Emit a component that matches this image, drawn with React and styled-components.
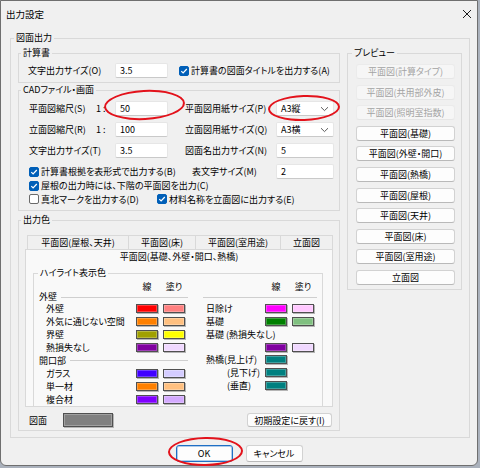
import React from 'react';
import styled, { createGlobalStyle } from 'styled-components';

const GlobalStyle = createGlobalStyle`
  html, body { margin: 0; padding: 0; }
  body {
    background: #aab1bc;
    font-family: "Noto Sans CJK JP", "Noto Sans", sans-serif;
    font-size: 9px;
    font-feature-settings: "palt";
    color: #000;
  }
  * { box-sizing: border-box; }
`;

const Window = styled.div`
  width: 478px;
  height: 466px;
  background: #f0f0f0;
  border: 1px solid #6f6f6f;
  border-radius: 0 0 6px 6px;
  display: flex;
  flex-direction: column;
`;

const TitleBar = styled.div`
  height: 26px;
  flex: none;
  display: flex;
  align-items: center;
  justify-content: space-between;
  padding: 0 5px 0 5px;
  font-size: 9.5px;
`;

const Group = styled.fieldset`
  margin: 0;
  padding: 0;
  min-width: 0;
  border: 1px solid #d9d9d9;
  flex: none;
  ${p => p.$w && `width: ${p.$w}px;`}
  ${p => p.$h && `height: ${p.$h}px;`}
`;

const Legend = styled.legend`
  margin-left: 3px;
  padding: 0 2px;
  height: 14px;
  line-height: 14px;
  white-space: nowrap;
`;

const MainGroup = styled(Group)`
  margin: 4px 0 0 9px;
`;

const MainBody = styled.div`
  display: grid;
  grid-template-columns: 322px 115px;
  column-gap: 7px;
  align-items: start;
  padding: 1px 7px 6px 7px;
`;

const Column = styled.div`
  display: flex;
  flex-direction: column;
  gap: ${p => p.$gap || 0}px;
`;

const CalcBody = styled.div`
  padding: 3px 0 4px 9px;
`;

const FormRow = styled.div`
  display: flex;
  align-items: center;
  height: ${p => p.$h || 15}px;
`;

const Cell = styled.div`
  display: flex;
  align-items: center;
  ${p => p.$w && `width: ${p.$w}px; flex: none;`}
`;

const FieldLabel = styled.span`
  width: ${p => p.$w}px;
  flex: none;
  white-space: nowrap;
  padding-left: ${p => p.$indent || 0}px;
`;

const Scale = styled.span`
  width: 19px;
  flex: none;
  white-space: nowrap;
`;

const TextBox = styled.div`
  width: ${p => p.$w || 53}px;
  height: 15px;
  flex: none;
  background: #fff;
  border: 1px solid #e6e6e6;
  border-bottom-color: #c9c9c9;
  border-radius: 2px;
  padding: 0 4px;
  display: flex;
  align-items: center;
  justify-content: space-between;
`;

const CadBody = styled.div`
  padding: 4px 4px 4px 10px;
`;

const InputRows = styled.div`
  display: flex;
  flex-direction: column;
  gap: 6px;
`;

const ColorBody = styled.div`
  padding: 8px 6px 3px 6px;
`;

const TabRow = styled.div`
  display: flex;
  height: 14px;
  padding-left: 2px;
`;

const Tab = styled.div`
  width: ${p => p.$w}px;
  flex: none;
  border: 1px solid #d9d9d9;
  border-bottom: none;
  border-right: ${p => (p.$last ? '1px solid #d9d9d9' : 'none')};
  display: flex;
  align-items: center;
  justify-content: center;
  white-space: nowrap;
  line-height: 12px;
`;

const ActiveTab = styled.div`
  height: 14px;
  background: #f9f9f9;
  border: 1px solid #d9d9d9;
  border-bottom: none;
  display: flex;
  align-items: center;
  justify-content: center;
  line-height: 12px;
`;

const TabPanel = styled.div`
  height: 144px;
  background: #f9f9f9;
  border: 1px solid #d9d9d9;
  border-top: none;
  overflow: hidden;
  padding: 3px 0 0 7px;
`;

const HighlightBody = styled.div`
  display: flex;
  gap: 15px;
  padding: 1px 0 0 5px;
`;

const ColorCol = styled.div`
  width: ${p => p.$w}px;
  flex: none;
  display: flex;
  flex-direction: column;
`;

const ColorRow = styled.div`
  display: grid;
  grid-template-columns: ${p => p.$label}px 22px 22px;
  column-gap: 5px;
  align-items: center;
  height: ${p => p.$h || 13}px;
`;

const ItemLabel = styled.span`
  white-space: nowrap;
  padding-left: ${p => p.$indent || 0}px;
  line-height: 12px;
`;

const WideLabel = styled(ItemLabel)`
  grid-column: 1 / span 3;
`;

const HeadCell = styled.span`
  text-align: center;
  line-height: 11px;
  white-space: nowrap;
`;

const Section = styled.div`
  display: flex;
  align-items: center;
  height: ${p => p.$h || 10}px;
  line-height: 10px;
  white-space: nowrap;
  &::after {
    content: '';
    flex: 1;
    height: 1px;
    background: #cfcfcf;
    margin-left: ${p => (p.$empty ? 0 : 4)}px;
  }
`;

const Swatch = styled.span`
  display: block;
  width: ${p => p.$w || 22}px;
  height: ${p => p.$h || 9}px;
  background: ${p => p.$c};
  border: 1px solid #505050;
  box-shadow: 1px 1px 0 #b5b5b5, inset 0 0 0 1px rgba(255, 255, 255, 0.25);
`;

const ColorFoot = styled.div`
  display: flex;
  align-items: center;
  justify-content: space-between;
  height: 14px;
  margin-top: 6px;
  padding: 0 1px 0 4px;
`;

const FootLabel = styled.span`
  width: 34px;
  flex: none;
`;

const PreviewBody = styled.div`
  display: flex;
  flex-direction: column;
  gap: 5.6px;
  padding: 4px 6px 4px 8px;
`;

const Button = styled.div`
  width: ${p => p.$w || 99}px;
  height: ${p => p.$h || 15}px;
  flex: none;
  display: flex;
  align-items: center;
  justify-content: center;
  white-space: nowrap;
  border-radius: 3px;
  background: ${p => (p.$disabled ? '#f6f6f6' : '#fdfdfd')};
  color: ${p => (p.$disabled ? '#a3a3a3' : '#000')};
  border: 1px solid ${p => (p.$disabled ? '#ebebeb' : '#d2d2d2')};
  border-bottom-color: ${p => (p.$disabled ? '#e6e6e6' : '#b9b9b9')};
  ${p => p.$default && `
    border: 1px solid #1f6fc5;
    box-shadow: inset 0 0 0 1px rgba(31, 111, 197, 0.35);
  `}
`;

const Footer = styled.div`
  display: flex;
  justify-content: center;
  gap: 13px;
  margin-top: 7px;
`;

const Marked = styled.span`
  position: relative;
  display: inline-flex;
  flex: none;
`;

const Ring = styled.span`
  position: absolute;
  pointer-events: none;
  left: ${p => p.$x}px;
  top: ${p => p.$y}px;
  width: ${p => p.$w}px;
  height: ${p => p.$h}px;
  border: 2px solid #e3121b;
  border-radius: 50%;
  transform: rotate(${p => p.$r || 0}deg);
`;

const CheckItem = styled.label`
  display: inline-flex;
  align-items: center;
  gap: 2px;
  white-space: nowrap;
  ${p => p.$w && `width: ${p.$w}px; flex: none;`}
`;

const Box = styled.span`
  width: 10px;
  height: 10px;
  flex: none;
  border-radius: 2px;
  display: inline-flex;
  align-items: center;
  justify-content: center;
  background: ${p => (p.$on ? '#005fb8' : '#fff')};
  border: 1px solid ${p => (p.$on ? '#005fb8' : '#6a6a6a')};
`;

const Check = ({ on = true, w, children }) => (
  <CheckItem $w={w}>
    <Box $on={on}>
      {on && (
        <svg width="8" height="8" viewBox="0 0 8 8">
          <path d="M1.3 4.2 L3.1 6 L6.8 2" fill="none" stroke="#fff" strokeWidth="1.2" />
        </svg>
      )}
    </Box>
    {children}
  </CheckItem>
);

const Chevron = () => (
  <svg width="9" height="6" viewBox="0 0 9 6">
    <path d="M1 1.2 L4.5 4.6 L8 1.2" fill="none" stroke="#5c5c5c" strokeWidth="1" />
  </svg>
);

const CloseIcon = () => (
  <svg width="10" height="10" viewBox="0 0 10 10">
    <path d="M1 1 L9 9 M9 1 L1 9" stroke="#1b1b1b" strokeWidth="1" />
  </svg>
);

const previewButtons = [
  ['平面図(計算タイプ)', true],
  ['平面図(共用部外皮)', true],
  ['平面図(照明室指数)', true],
  ['平面図(基礎)'],
  ['平面図(外壁・開口)'],
  ['平面図(熱橋)'],
  ['平面図(屋根)'],
  ['平面図(天井)'],
  ['平面図(床)'],
  ['平面図(室用途)'],
  ['立面図'],
];

const leftColors = [
  { section: '外壁' },
  { label: '外壁', line: '#ff0000', fill: '#ff8080' },
  { label: '外気に通じない空間', line: '#ff8000', fill: '#ffc080' },
  { label: '界壁', line: '#a0a000', fill: '#ffff00' },
  { label: '熱損失なし', line: '#8000a0', fill: '#f0d8ff' },
  { section: '開口部', h: 13 },
  { label: 'ガラス', line: '#4000ff', fill: '#d4ccff' },
  { label: '単一材', line: '#ff8000', fill: '#ffc080' },
  { label: '複合材', line: '#8000ff', fill: '#d4aaff' },
];

const App = () => {
  return (
    <>
      <GlobalStyle />
      <Window>
        <TitleBar>
          <span>出力設定</span>
          <CloseIcon />
        </TitleBar>

        <MainGroup $w={460}>
          <Legend>図面出力</Legend>
          <MainBody>
            <Column $gap={0}>
              <Group>
                <Legend style={{ marginLeft: 2 }}>計算書</Legend>
                <CalcBody>
                  <FormRow>
                    <FieldLabel $w={87}>文字出力サイズ(O)</FieldLabel>
                    <TextBox>3.5</TextBox>
                    <Cell style={{ marginLeft: 11 }}>
                      <Check>計算書の図面タイトルを出力する(A)</Check>
                    </Cell>
                  </FormRow>
                </CalcBody>
              </Group>

              <Group>
                <Legend style={{ marginLeft: 2 }}>CADファイル・画面</Legend>
                <CadBody>
                  <InputRows>
                    <FormRow>
                      <Cell $w={156}>
                        <FieldLabel $w={67}>平面図縮尺(S)</FieldLabel>
                        <Scale>1 :</Scale>
                        <Marked>
                          <TextBox>50</TextBox>
                          <Ring $x={-11} $y={-11} $w={81} $h={30} $r={-3} />
                        </Marked>
                      </Cell>
                      <Cell>
                        <FieldLabel $w={91}>平面図用紙サイズ(P)</FieldLabel>
                        <Marked>
                          <TextBox $w={58}>
                            A3縦
                            <Chevron />
                          </TextBox>
                          <Ring $x={-8} $y={-6} $w={72} $h={26} $r={-2} />
                        </Marked>
                      </Cell>
                    </FormRow>
                    <FormRow>
                      <Cell $w={156}>
                        <FieldLabel $w={67}>立面図縮尺(R)</FieldLabel>
                        <Scale>1 :</Scale>
                        <TextBox>100</TextBox>
                      </Cell>
                      <Cell>
                        <FieldLabel $w={91}>立面図用紙サイズ(Q)</FieldLabel>
                        <TextBox $w={58}>
                          A3横
                          <Chevron />
                        </TextBox>
                      </Cell>
                    </FormRow>
                    <FormRow>
                      <Cell $w={156}>
                        <FieldLabel $w={86}>文字出力サイズ(T)</FieldLabel>
                        <TextBox>3.5</TextBox>
                      </Cell>
                      <Cell>
                        <FieldLabel $w={91}>図面名出力サイズ(N)</FieldLabel>
                        <TextBox $w={58}>5</TextBox>
                      </Cell>
                    </FormRow>
                    <FormRow>
                      <Cell $w={156}>
                        <Check>計算書根拠を表形式で出力する(B)</Check>
                      </Cell>
                      <Cell>
                        <FieldLabel $w={91} $indent={7}>表文字サイズ(M)</FieldLabel>
                        <TextBox $w={58}>2</TextBox>
                      </Cell>
                    </FormRow>
                  </InputRows>
                  <FormRow $h={13.5}>
                    <Check>屋根の出力時には、下階の平面図を出力(C)</Check>
                  </FormRow>
                  <FormRow $h={13.5}>
                    <Check on={false} w={128}>真北マークを出力する(D)</Check>
                    <Check>材料名称を立面図に出力する(E)</Check>
                  </FormRow>
                </CadBody>
              </Group>

              <Group style={{ marginTop: 2 }}>
                <Legend style={{ marginLeft: 2 }}>出力色</Legend>
                <ColorBody>
                  <TabRow>
                    <Tab $w={101}>平面図(屋根、天井)</Tab>
                    <Tab $w={67}>平面図(床)</Tab>
                    <Tab $w={85}>平面図(室用途)</Tab>
                    <Tab $w={53} $last>立面図</Tab>
                  </TabRow>
                  <ActiveTab>平面図(基礎、外壁・開口、熱橋)</ActiveTab>
                  <TabPanel>
                    <Group $w={290} $h={150}>
                      <Legend style={{ marginLeft: 4 }}>ハイライト表示色</Legend>
                      <HighlightBody>
                        <ColorCol $w={149}>
                          <ColorRow $label={92} $h={11}>
                            <span />
                            <HeadCell>線</HeadCell>
                            <HeadCell>塗り</HeadCell>
                          </ColorRow>
                          {leftColors.map((c, i) =>
                            c.section ? (
                              <Section key={i} $h={c.h}>{c.section}</Section>
                            ) : (
                              <ColorRow key={i} $label={92}>
                                <ItemLabel $indent={7}>{c.label}</ItemLabel>
                                <Swatch $c={c.line} />
                                <Swatch $c={c.fill} />
                              </ColorRow>
                            )
                          )}
                        </ColorCol>

                        <ColorCol $w={114}>
                          <ColorRow $label={57} $h={11}>
                            <span />
                            <HeadCell>線</HeadCell>
                            <HeadCell>塗り</HeadCell>
                          </ColorRow>
                          <Section $empty />
                          <ColorRow $label={57}>
                            <ItemLabel $indent={3}>日除け</ItemLabel>
                            <Swatch $c="#ff00ff" />
                            <Swatch $c="#ffc8ff" />
                          </ColorRow>
                          <ColorRow $label={57}>
                            <ItemLabel $indent={3}>基礎</ItemLabel>
                            <Swatch $c="#008000" />
                            <Swatch $c="#80c080" />
                          </ColorRow>
                          <ColorRow $label={57}>
                            <WideLabel $indent={3}>基礎 (熱損失なし)</WideLabel>
                          </ColorRow>
                          <ColorRow $label={57} $h={12}>
                            <span />
                            <Swatch $c="#8000a0" />
                            <Swatch $c="#f0d8ff" />
                          </ColorRow>
                          <ColorRow $label={57}>
                            <ItemLabel $indent={3}>熱橋(見上げ)</ItemLabel>
                            <Swatch $c="#008080" />
                          </ColorRow>
                          <ColorRow $label={57}>
                            <ItemLabel $indent={24}>(見下げ)</ItemLabel>
                            <Swatch $c="#008080" />
                          </ColorRow>
                          <ColorRow $label={57}>
                            <ItemLabel $indent={24}>(垂直)</ItemLabel>
                            <Swatch $c="#008080" />
                          </ColorRow>
                        </ColorCol>
                      </HighlightBody>
                    </Group>
                  </TabPanel>
                  <ColorFoot>
                    <Cell>
                      <FootLabel>図面</FootLabel>
                      <Swatch $c="#808080" $w={50} $h={14} />
                    </Cell>
                    <Button $w={85} $h={14}>初期設定に戻す(I)</Button>
                  </ColorFoot>
                </ColorBody>
              </Group>
            </Column>

            <Group>
              <Legend style={{ marginLeft: 4 }}>プレビュー</Legend>
              <PreviewBody>
                {previewButtons.map(([label, disabled]) => (
                  <Button key={label} $disabled={disabled}>
                    {label}
                  </Button>
                ))}
              </PreviewBody>
            </Group>
          </MainBody>
        </MainGroup>

        <Footer>
          <Marked>
            <Button $w={57} $h={17} $default>OK</Button>
            <Ring $x={-8} $y={-8} $w={75} $h={29} $r={-1} />
          </Marked>
          <Button $w={57} $h={17}>キャンセル</Button>
        </Footer>
      </Window>
    </>
  );
};

export default App;
